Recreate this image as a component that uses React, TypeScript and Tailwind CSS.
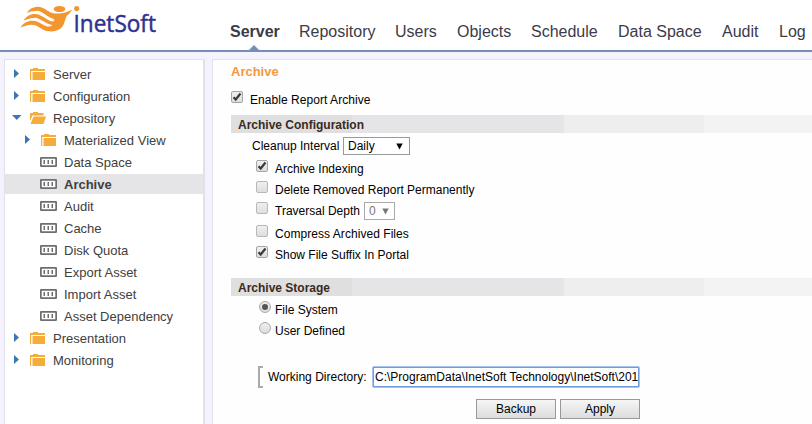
import React from "react";

const navItems = [
  { label: "Server", cls: "w-[69px] font-bold", active: true },
  { label: "Repository", cls: "w-[96px]" },
  { label: "Users", cls: "w-[62px]" },
  { label: "Objects", cls: "w-[74px]" },
  { label: "Schedule", cls: "w-[87px]" },
  { label: "Data Space", cls: "w-[104px]" },
  { label: "Audit", cls: "w-[57px]" },
  { label: "Log", cls: "w-[34px]" },
];

type Kind = "closed" | "open" | "leaf";
const tree: { label: string; kind: Kind; nested?: boolean; selected?: boolean }[] = [
  { label: "Server", kind: "closed" },
  { label: "Configuration", kind: "closed" },
  { label: "Repository", kind: "open" },
  { label: "Materialized View", kind: "closed", nested: true },
  { label: "Data Space", kind: "leaf", nested: true },
  { label: "Archive", kind: "leaf", nested: true, selected: true },
  { label: "Audit", kind: "leaf", nested: true },
  { label: "Cache", kind: "leaf", nested: true },
  { label: "Disk Quota", kind: "leaf", nested: true },
  { label: "Export Asset", kind: "leaf", nested: true },
  { label: "Import Asset", kind: "leaf", nested: true },
  { label: "Asset Dependency", kind: "leaf", nested: true },
  { label: "Presentation", kind: "closed" },
  { label: "Monitoring", kind: "closed" },
];

function Logo() {
  return (
    <svg width="150" height="40" viewBox="0 0 150 40" className="ml-[15px] shrink-0">
      <g fill="#f4962f">
        <ellipse cx="44.5" cy="9" rx="5.8" ry="3.1" />
        <circle cx="61.7" cy="8.6" r="2.6" />
        <path d="M11.500 13C15 8 20 6 25 7C31 8.500 34 13 40 13.500C47 14 52 12.500 57 9.500C56 12 54 14 51.500 16C51 18 50 20 49.500 22C48 28 43 31.500 36 31.500C29 31.500 26 28 21 25.500C16 23.500 11 25.500 5.500 27.500C8 23 13 20.500 18 20.800C24 21.200 27 25 32 26.500L36 26.500C31 24.500 27 20 22 18.500C17 17 13 19 8.500 20.800C11 16 16 13.500 21 14C28 15 31 20 37 21.500L40 21C34 18.500 30 13 24 11.500C19 10.300 15 11.500 11.500 13Z" />
      </g>
      <path d="M22 11C28 12.500 32 18 39 19.500M20 18C26 19 30 25 37 25.500" fill="none" stroke="#fff" strokeWidth="1.200" />
      <text x="58.500" y="31.700" fontSize="24.500" textLength="82.500" lengthAdjust="spacingAndGlyphs" fill="#2f3192" stroke="#2f3192" strokeWidth="0.500" fontFamily="'Open Sans', sans-serif">
        InetSoft
      </text>
    </svg>
  );
}

function Arrow({ kind }: { kind: Kind }) {
  return (
    <svg width="10" height="10" viewBox="0 0 10 10" className="shrink-0">
      {kind === "closed" && <path d="M2 0L7 4.500L2 9Z" fill="#3c76b4" />}
      {kind === "open" && <path d="M0 2H9.500L4.750 7Z" fill="#3c76b4" />}
    </svg>
  );
}

function NodeIcon({ kind }: { kind: Kind }) {
  if (kind === "leaf")
    return (
      <svg width="17" height="12" viewBox="0 0 17 12" className="shrink-0">
        <rect x="0.800" y="1.800" width="15.400" height="8.400" rx="0.500" fill="#fff" stroke="#6d6e71" strokeWidth="1.800" />
        <path d="M4.250 4V8M8.250 4V8M12.250 4V8" stroke="#6d6e71" strokeWidth="1.500" />
      </svg>
    );
  return (
    <svg width="17" height="12" viewBox="0 0 17 12" className="shrink-0">
      {kind === "closed" ? (
        <>
          <path d="M0 12V1H3V0H8V1H15V3H1.200V12Z" fill="#f5ac3b" />
          <path d="M2.500 4H15V12H2.500Z" fill="#f5ac3b" />
        </>
      ) : (
        <>
          <path d="M0 9V1H3V0H8V1H13.500V3.500H2.500Z" fill="#f5ac3b" />
          <path d="M3.500 4.500H16L13.500 12H0.500Z" fill="#f5ac3b" />
        </>
      )}
    </svg>
  );
}

function CheckBox({ checked, muted }: { checked?: boolean; muted?: boolean }) {
  return (
    <span
      role="checkbox"
      aria-checked={!!checked}
      className={`block h-3 w-3 shrink-0 rounded-[2px] border bg-gradient-to-b from-[#efefef] to-[#dedede] ${muted ? "border-[#b8b8b8]" : "border-[#a5a5a5]"}`}
    >
      {checked && (
        <svg width="10" height="10" viewBox="0 0 10 10">
          <path d="M1.500 5.300L3.700 7.500L8.500 1.500" fill="none" stroke="#3b3b3b" strokeWidth="2.200" />
        </svg>
      )}
    </span>
  );
}

function Radio({ checked }: { checked?: boolean }) {
  return (
    <span role="radio" aria-checked={!!checked} className="flex h-3 w-3 shrink-0 items-center justify-center rounded-full border border-[#a9a9a9] bg-gradient-to-b from-[#eeeeee] to-[#dddddd]">
      {checked && <span className="h-1.5 w-1.5 rounded-full bg-[#555]" />}
    </span>
  );
}

function SectionBar({ title }: { title: string }) {
  return (
    <h2 className="flex h-[18px] text-[12px] leading-[21px] font-bold text-[#3a2a22]">
      <span className="w-[121px] min-w-0 shrink-0 bg-[#dfdfdf] pl-[7px] whitespace-nowrap">
        <span className="relative">{title}</span>
      </span>
      <span className="w-[212px] bg-[#e5e5e7]" />
      <span className="w-[140px] bg-[#eeeeee]" />
      <span className="flex-1 bg-[#f3f3f3]" />
    </h2>
  );
}

function Label({ children, cls = "" }: { children: React.ReactNode; cls?: string }) {
  return <span className={`mt-px block leading-4 whitespace-nowrap ${cls}`}>{children}</span>;
}

function Caret({ color }: { color: string }) {
  return (
    <svg width="7" height="7" viewBox="0 0 7 7">
      <path d="M0.300 0.500H6.700L3.500 6.500Z" fill={color} />
    </svg>
  );
}

export default function App() {
  return (
    <div className="flex h-[424px] w-[812px] flex-col overflow-hidden bg-[#f3f2fe] font-['Liberation_Sans',Arial,sans-serif] text-[12px] text-black">
      <header className="flex h-[52px] shrink-0 border-b-2 border-[#788cb8] bg-white">
        <Logo />
        <nav className="ml-[65px] flex text-[16px] text-[#3b3b49]">
          {navItems.map((n) => (
            <a key={n.label} className={`relative block h-[50px] shrink-0 pt-[22px] leading-[19px] whitespace-nowrap ${n.cls}`}>
              {n.label}
              {n.active && (
                <svg width="10" height="5" viewBox="0 0 10 5" className="absolute bottom-0 left-[19px]">
                  <path d="M0 5L5 0L10 5Z" fill="#788cb8" />
                </svg>
              )}
            </a>
          ))}
        </nav>
      </header>

      <div className="flex flex-1 pt-[7px] pl-1">
        <aside className="mr-[7px] w-[201px] shrink-0 border-t border-r-2 border-l border-[#e1e1e6] bg-white pt-[4px] text-[13px] text-[#404040]">
          {tree.map((t) => (
            <div
              key={t.label}
              className={`mb-0.5 flex h-5 items-center ${t.nested ? "pl-[18px]" : "pl-[7px]"} ${t.selected ? "bg-[#e5e5e7] font-bold" : ""}`}
            >
              <Arrow kind={t.kind} />
              <span className={t.kind === "leaf" ? "mr-[7px] ml-[7px]" : t.nested ? "mr-[6px] ml-[8px]" : "mr-[6px] ml-[8px]"}>
                <NodeIcon kind={t.kind} />
              </span>
              <span className="pt-px leading-5 whitespace-nowrap">{t.label}</span>
            </div>
          ))}
        </aside>

        <main className="min-w-0 flex-1 border-t border-l border-[#e1e1ea] bg-[#fefefe] pl-[18px]">
          <h1 className="mt-[3px] h-4 text-[13px] leading-[17px] font-bold text-[#f5993d]">Archive</h1>
          <div className="mt-[12px] flex h-3 gap-[7px]">
            <CheckBox checked />
            <Label cls="tracking-[0.050px]">Enable Report Archive</Label>
          </div>
          <div className="mt-[12px]">
            <SectionBar title="Archive Configuration" />
          </div>
          <div className="mt-1 flex h-[18px] pl-[21px]">
            <Label cls="w-[91px]">Cleanup Interval</Label>
            <div className="flex h-[18px] w-[67px] items-center justify-between border border-[#999] bg-white pr-[6px] pl-1">
              <span className="leading-4">Daily</span>
              <Caret color="#000" />
            </div>
          </div>
          <div className="mt-[5px] flex h-3 gap-[7px] pl-[25px]">
            <CheckBox checked />
            <Label>Archive Indexing</Label>
          </div>
          <div className="mt-[9px] flex h-3 gap-[7px] pl-[25px]">
            <CheckBox muted />
            <Label>Delete Removed Report Permanently</Label>
          </div>
          <div className="mt-[9px] flex h-3 gap-[7px] pl-[25px]">
            <CheckBox muted />
            <Label cls="w-[82px]">Traversal Depth</Label>
            <div className="flex h-[18px] w-[31px] shrink-0 items-center justify-between border border-[#aaa] bg-white pr-[5px] pl-[4px] text-[#777]">
              <span className="leading-4">0</span>
              <Caret color="#777" />
            </div>
          </div>
          <div className="mt-[11px] flex h-3 gap-[7px] pl-[25px]">
            <CheckBox muted />
            <Label cls="tracking-[0.050px]">Compress Archived Files</Label>
          </div>
          <div className="mt-[9px] flex h-3 gap-[7px] pl-[25px]">
            <CheckBox checked />
            <Label>Show File Suffix In Portal</Label>
          </div>
          <div className="mt-[20px]">
            <SectionBar title="Archive Storage" />
          </div>
          <div className="mt-[5px] flex h-3 gap-1 pl-[28px]">
            <Radio checked />
            <Label>File System</Label>
          </div>
          <div className="mt-[9px] flex h-3 gap-1 pl-[28px]">
            <Radio />
            <Label>User Defined</Label>
          </div>
          <div className="mt-[32px] flex h-[22px] pl-[27px]">
            <span className="w-[5px] border-2 border-r-0 border-[#aaa]" />
            <Label cls="ml-[5px] w-[104px] pt-[2px]">Working Directory:</Label>
            <div className="h-[22px] w-[268px] rounded-[2px] border border-[#a6c4f3]">
              <div className="h-5 overflow-hidden border border-[#6f9ade] bg-white pl-[1px] leading-[19px] whitespace-nowrap">
                C:\ProgramData\InetSoft Technology\InetSoft\201
              </div>
            </div>
          </div>
          <div className="mt-[11px] flex gap-1 pl-[245px]">
            {["Backup", "Apply"].map((b) => (
              <button key={b} className="h-5 w-20 border border-[#999] bg-gradient-to-b from-[#f5f5f5] to-[#dddddd] text-center leading-[18px]">
                {b}
              </button>
            ))}
          </div>
        </main>
      </div>
    </div>
  );
}
